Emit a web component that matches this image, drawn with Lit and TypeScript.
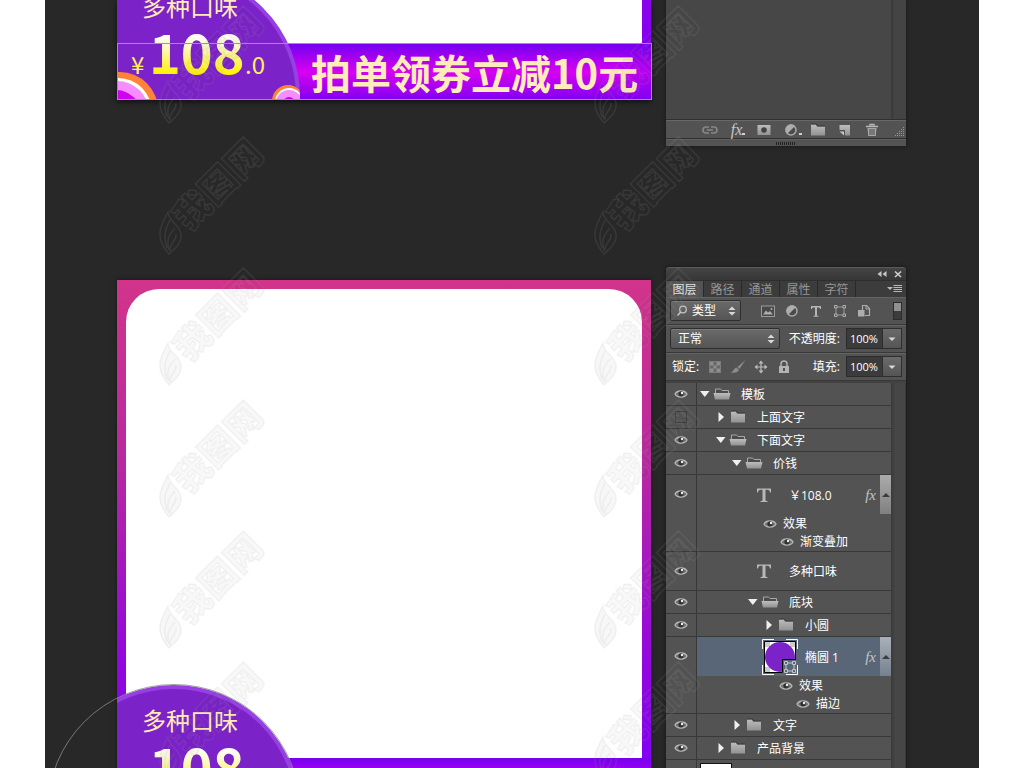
import { LitElement, html, svg, css, nothing } from "lit";
import { customElement, property, state } from "lit/decorators.js";
import { classMap } from "lit/directives/class-map.js";
import { styleMap } from "lit/directives/style-map.js";

const icon = (name: string) => {
  const grad = svg`<defs><linearGradient id="lg" x1="0" y1="0" x2="0" y2="1">
    <stop offset="0" stop-color="#bdbdbd"/><stop offset="1" stop-color="#929292"/></linearGradient></defs>`;
  const shapes: Record<string, unknown> = {
    eye: svg`<path d="M2 8C4 4 12 4 14 8C12 12 4 12 2 8z" fill="#707070" stroke="#b8b8b8" stroke-width="1.300"/>
      <circle cx="8" cy="7.800" r="2.600" fill="#303030"/><circle cx="9" cy="7" r="1.200" fill="#f0f0f0"/>`,
    closed: svg`<path d="M1 2.500h5l1 2h8v9H1z" fill="url(#lg)"/><path d="M1 2h5.500l1 2H15" fill="none" stroke="#2c2c2c" stroke-opacity=".7"/>`,
    open: svg`<path d="M1.500 8V3h5l1.500 1.500h6.500V8" fill="#4c4c4c" stroke="#a8a8a8"/><path d="M-.5 7h17l-1.500 6.500h-14z" fill="url(#lg)"/>`,
    text: svg`<path d="M1 1.500h14v4h-1c-.3-2-1-2.800-2.500-2.800H9.500v10c0 1 .5 1.300 2 1.300v1h-7v-1c1.500 0 2-.3 2-1.300v-10H4.500C3 2.700 2.300 3.500 2 5.500H1z" fill="#b8b8b8"/>`,
    smallText: svg`<path d="M3 3h10v3h-1c-.2-1.300-.7-1.500-1.700-1.500H9V12c0 .7.400.9 1.500.9v.8h-5v-.8c1.100 0 1.500-.2 1.500-.9V4.500H5.700C4.700 4.500 4.200 4.700 4 6H3z" fill="#b4b4b4"/>`,
    picture: svg`<rect x="1.500" y="3" width="13" height="10.500" fill="#484848" stroke="#9c9c9c"/><path d="M3 11.500l3-4 2 2 2-1.500 3 3.500z" fill="#adadad"/><circle cx="11.500" cy="6" r="1" fill="#adadad"/>`,
    adjust: svg`<circle cx="8" cy="8" r="5" fill="#4a4a4a" stroke="#a8a8a8" stroke-width="1.500"/><path d="M4 12A5.500 5.500 0 0 1 12 4z" fill="#adadad"/>`,
    transform: svg`<path d="M4 4h8v8H4z" fill="none" stroke="#9c9c9c"/><path d="M2.500 2.500h2.500v2.500H2.500zM11 2.500h2.500v2.500H11zM2.500 11h2.500v2.500H2.500zM11 11h2.500v2.500H11z" fill="#535353" stroke="#b0b0b0"/>`,
    smart: svg`<path d="M6.500 7V2.500h4l3 3v7H9" fill="none" stroke="#adadad" stroke-width="1.200"/><path d="M10 2v4h4" fill="none" stroke="#adadad"/><rect x="2" y="7" width="6.500" height="6.500" fill="#adadad"/>`,
    search: svg`<circle cx="8" cy="6.500" r="3.300" fill="none" stroke="#c4c4c4" stroke-width="1.300"/><path d="M5.800 9L2.500 12.500" stroke="#c4c4c4" stroke-width="1.600"/>`,
    pixels: svg`<rect x="2.500" y="2.500" width="11" height="11" fill="#686868" stroke="#7c7c7c"/><path d="M3 3h3.500v3.500H3zM9.500 3H13v3.500H9.500zM6.500 6.500h3v3h-3zM3 9.500h3.500V13H3zM9.500 9.500H13V13H9.500z" fill="#8d8d8d"/>`,
    brush: svg`<path d="M15.500 1L7.500 8l2 2z" fill="#8c8c8c"/><path d="M6.500 8.500l2.500 2.500c-1.500 3-5 3-8.500 2.500C4 13 3.500 9 6.500 8.500z" fill="#8c8c8c"/>`,
    move: svg`<path d="M8 1.500l2.500 3h-5zM8 14.500l2.500-3h-5zM1.500 8l3-2.500v5zM14.500 8l-3-2.500v5z" fill="#bcbcbc"/><path d="M8 3v10M3 8h10" stroke="#bcbcbc" stroke-width="1.200"/>`,
    lock: svg`<path d="M5 8V5a3 3 0 0 1 6 0v3" fill="none" stroke="#b4b4b4" stroke-width="1.500"/><rect x="3" y="7" width="10" height="7" fill="#b4b4b4"/><path d="M8 9v3" stroke="#444" stroke-width="1.800"/>`,
    link: svg`<path d="M7 5H4a3 3 0 0 0 0 6h3M9 5h3a3 3 0 0 1 0 6H9M5 8h6" fill="none" stroke="#888" stroke-width="1.600"/>`,
    mask: svg`<rect x="1.500" y="3" width="13" height="10" fill="url(#lg)"/><circle cx="8" cy="8" r="2.800" fill="#424242"/>`,
    fresh: svg`<path d="M2.500 3H13v10.500H8V8H2.500z" fill="url(#lg)"/><path d="M2.500 9.500H7v4z" fill="#c4c4c4"/>`,
    trash: svg`<path d="M2 4.500h12M6 3.500V2.500h4v1" fill="none" stroke="#b8b8b8" stroke-width="1.400"/><path d="M3.500 6h9l-.7 8H4.200z" fill="#a6a6a6"/><path d="M6 7v6M8 7v6M10 7v6" stroke="#484848"/>`,
    collapse: svg`<path d="M7.500 5v6L3.500 8zM12.500 5v6L8.500 8z" fill="#c8c8c8"/>`,
    close: svg`<path d="M5 5.500l6 5.500M11 5.500L5 11" stroke="#d0d0d0" stroke-width="1.600"/>`,
    menu: svg`<path d="M0 6h6L3 9z" fill="#b8b8b8"/><path d="M6.500 4.500h8.500M6.500 6.500h8.500M6.500 8.500h8.500M6.500 10.500h8.500" stroke="#b8b8b8"/>`,
    updown: svg`<path d="M4.500 7h7L8 3.500zM4.500 9h7L8 12.500z" fill="#d8d8d8"/>`,
    down: svg`<path d="M4.500 6.500h7L8 10z" fill="#d8d8d8"/>`,
    up: svg`<path d="M4 10h8L8 6z" fill="#3c3c3c"/>`,
    expanded: svg`<path d="M3 5h9.500L7.800 11z" fill="#f0f0f0"/>`,
    collapsed: svg`<path d="M5.500 3l5.500 5-5.500 5z" fill="#f0f0f0"/>`,
    empty: svg`<rect x="2.500" y="2.500" width="11" height="11" fill="none" stroke="#3c3c3c"/>`,
  };
  return html`<svg width="16" height="16" viewBox="0 0 16 16" overflow="visible" aria-hidden="true">${grad}${shapes[name]}</svg>`;
};

const iconStyles = css`
  * { box-sizing: border-box; }
  svg { display: block; flex: none; }
  button {
    display: flex; align-items: center; justify-content: center;
    padding: 0; border: 0; background: none; color: inherit; font: inherit;
  }
`;

@customElement("promo-board")
class PromoBoard extends LitElement {
  @property({ type: Boolean }) banner = false;

  static styles = css`
    :host { display: block; }
    svg { display: block; width: 100%; overflow: visible; }
    text { font-family: "Noto Sans CJK SC", sans-serif; }
    .taste { font-size: 24px; fill: #ffedb5; }
    .price { font-size: 54px; font-weight: 700; }
    .small { font-size: 24px; fill: #fdf05a; font-weight: 400; }
    .slogan { font-size: 40px; font-weight: 700; fill: #ffedb9; }
  `;

  render() {
    return html`<svg viewBox="0 0 534 534">
      <defs>
        <linearGradient id="edge" x1="0" y1="0" x2="0" y2="1">
          <stop offset="0" stop-color="#d2348a"/><stop offset=".35" stop-color="#b828a0"/>
          <stop offset=".7" stop-color="#9408dc"/><stop offset=".88" stop-color="#8400f0"/><stop offset="1" stop-color="#8400f0"/>
        </linearGradient>
        <linearGradient id="bar" x1="0" y1="0" x2="0" y2="1">
          <stop offset="0" stop-color="#7400f0"/><stop offset=".5" stop-color="#d800f2"/><stop offset="1" stop-color="#8000f0"/>
        </linearGradient>
        <linearGradient id="barEnd" x1="0" y1="0" x2="1" y2="0">
          <stop offset=".93" stop-color="#8000f0" stop-opacity="0"/><stop offset="1" stop-color="#8000f0" stop-opacity=".4"/>
        </linearGradient>
        <linearGradient id="gold" gradientUnits="userSpaceOnUse" x1="0" y1="468" x2="0" y2="508">
          <stop offset="0" stop-color="#fff"/><stop offset=".3" stop-color="#fdf9cc"/><stop offset="1" stop-color="#fff200"/>
        </linearGradient>
        <clipPath id="frame"><rect width="534" height="534"/></clipPath>
        <clipPath id="disc"><circle cx="57" cy="531" r="126"/></clipPath>
      </defs>
      <g clip-path="url(#frame)">
        <rect width="534" height="534" fill="url(#edge)"/>
        <path d="M9 478V42a33 33 0 0 1 33-33h450a33 33 0 0 1 33 33v436z" fill="#fff"/>
        <rect y="478" width="534" height="56" fill="url(#bar)"/>
        <rect y="478" width="534" height="56" fill="url(#barEnd)"/>
        <circle cx="57" cy="531" r="124" fill="#7b22c8" stroke="#963fe2" stroke-width="4"/>
        <text class="taste" x="25" y="450">多种口味</text>
        <text class="small" x="14" y="508">¥</text>
        <text class="price" x="32" y="508" fill="url(#gold)">108</text>
        <text class="small" x="128" y="508">.0</text>
        <g clip-path="url(#disc)">
          <circle cx="3" cy="544" r="38" fill="#ff8236"/><circle cx="1" cy="546" r="34" fill="#fff"/>
          <circle cx="0" cy="547" r="32" fill="#f58cff"/><circle cx="-1" cy="549" r="25" fill="#d000f0"/>
          <circle cx="171" cy="535" r="16" fill="#ff8236"/><circle cx="172" cy="536" r="14" fill="#fff"/>
          <circle cx="172" cy="537" r="13" fill="#f58cff"/><circle cx="172" cy="537" r="6" fill="#c800f0"/>
        </g>
        <text class="slogan" x="194" y="523">拍单领券立减10元</text>
      </g>
      ${this.banner
        ? svg`<rect x=".5" y="477.500" width="534" height="56" fill="none" stroke="#a08fb0"/>`
        : svg`<circle cx="57" cy="531" r="126.500" fill="none" stroke="#8a8a8a" stroke-width=".8"/>`}
    </svg>`;
  }
}

interface Layer {
  name: string; depth: number; kind: "open" | "closed" | "text" | "shape";
  hidden?: boolean; selected?: boolean; effects?: string[];
}

const layers: Layer[] = [
  { name: "模板", depth: 0, kind: "open" },
  { name: "上面文字", depth: 1, kind: "closed", hidden: true },
  { name: "下面文字", depth: 1, kind: "open" },
  { name: "价钱", depth: 2, kind: "open" },
  { name: "￥108.0", depth: 3, kind: "text", effects: ["效果", "渐变叠加"] },
  { name: "多种口味", depth: 3, kind: "text" },
  { name: "底块", depth: 3, kind: "open" },
  { name: "小圆", depth: 4, kind: "closed" },
  { name: "椭圆 1", depth: 4, kind: "shape", selected: true, effects: ["效果", "描边"] },
  { name: "文字", depth: 2, kind: "closed" },
  { name: "产品背景", depth: 1, kind: "closed" },
];

@customElement("layers-panel")
class LayersPanel extends LitElement {
  @state() private tab = "图层";

  static styles = [iconStyles, css`
    :host {
      display: block; background: #535353; color: #fff;
      font: 12px/16px "Open Sans", "Noto Sans CJK SC", sans-serif;
      border-radius: 4px 4px 0 0; box-shadow: 0 0 4px #161616;
    }
    .title {
      display: flex; justify-content: flex-end; height: 13px;
      background: linear-gradient(#444, #373737); border-top: 1px solid #5a5a5a; border-radius: 4px 4px 0 0;
    }
    .tabs { display: flex; height: 17px; background: #3c3c3c; border-top: 1px solid #2e2e2e; }
    .tab { width: 38px; height: 16px; padding-top: 1px; border-right: 1px solid #292929; color: #969696; }
    .tab.active { background: #535353; color: #e6e6e6; }
    .options { margin-left: auto; padding-right: 3px; }
    .bar {
      display: flex; align-items: center; height: 28px; padding: 0 4px 1px;
      border-bottom: 1px solid #383838; border-top: 1px solid #636363;
    }
    .pick {
      display: flex; align-items: center; height: 21px;
      border: 1px solid #2e2e2e; border-radius: 2px; background: linear-gradient(#6a6a6a, #555);
      box-shadow: inset 0 1px #7a7a7a;
    }
    .pick select {
      appearance: none; width: 100%; height: 19px; padding: 0 0 0 7px; border: 0;
      background: none; color: #fff; font: inherit;
    }
    .pick.kind { width: 71px; padding-left: 4px; }
    .pick.kind select { padding-left: 1px; }
    .pick.mode { width: 110px; }
    .arrows { flex: none; margin-left: -16px; pointer-events: none; }
    .filters { display: flex; margin-left: 15px; }
    .filters button { width: 24px; height: 20px; }
    .toggle { width: 9px; height: 18px; margin-left: auto; border: 1px solid #2c2c2c; background: linear-gradient(#909090 50%, #3c3c3c 50%); }
    .amount { display: flex; align-items: center; margin-left: auto; }
    .amount input {
      width: 37px; height: 21px; margin-left: 6px; padding: 0 0 0 3px; border: 1px solid #2c2c2c;
      background: #3b3b3b; color: #fff; font: 11px/16px "Open Sans", sans-serif;
    }
    .amount button { width: 20px; height: 21px; margin-left: -1px; border: 1px solid #2e2e2e; background: linear-gradient(#6a6a6a, #555); }
    .locklabel { padding: 0 4px 0 2px; }
    .locks { display: flex; }
    .locks button { width: 23px; height: 20px; }
    .scroller { display: flex; background: #434343; border-top: 2px solid #424242; }
    .list { flex: 1; margin: 0; padding: 0; list-style: none; background: #535353; }
    .track { width: 15px; background: linear-gradient(90deg, #3a3a3a, #464646 4px); border-right: 1px solid #3a3a3a; }
    .row { display: flex; border-bottom: 1px solid #383838; }
    .see { width: 31px; border-right: 1px solid #383838; }
    .see button { width: 30px; height: 22px; }
    .tall .see button { height: 38px; }
    .body { flex: 1; }
    .main { display: flex; align-items: center; height: 22px; }
    .tall .main { height: 38px; }
    .fxrow .main { height: 39px; }
    .selected .main { background: #596678; }
    .twist { width: 10px; height: 20px; margin-right: 2px; }
    .glyph { display: flex; justify-content: center; width: 19px; margin-right: 10px; }
    .glyph.wide { width: 31px; }
    .glyph svg { margin: 0 -8px; }
    .name { padding-top: 2px; }
    .fx { margin-left: auto; margin-right: 4px; font: italic 15px/16px "Liberation Serif", serif; color: #c4c4c4; }
    .fold { width: 11px; height: 39px; background: linear-gradient(#ababab, #808080); }
    .selected .fold { background: linear-gradient(#aab0b8, #76808f); }
    .effect { display: flex; align-items: center; gap: 6px; height: 19px; padding-left: 18px; }
    .effect:last-child { height: 18px; padding-left: 35px; }
    .effect button { width: 14px; }
    .backdrop { height: 34px; width: 32px; margin: 3px 0 0 3px; border: 1px solid #111; background: #fff; }
  `];

  private layerIcon(layer: Layer) {
    if (layer.kind === "shape") {
      return html`<svg width="36" height="36" viewBox="0 0 36 36">
        <path d="M.5 10V.5H12M24 .5h11.500V10M35.500 26v9.500H24M12 35.500H.5V26" fill="none" stroke="#fff"/>
        <path d="M2.500 2.500h31v31h-31z" fill="#fff" stroke="#000"/>
        <path d="M3 3h5v5H3zM28 3h5v5h-5zM3 28h5v5H3z" fill="#ccc"/>
        <circle cx="18" cy="18" r="15" fill="#7b22c8"/>
        <path d="M20.500 34.500v-14h14v14z" fill="#596678"/><path d="M20.500 33v-12.500H34" fill="none" stroke="#000"/>
        <path d="M24 24h8v8h-8z" fill="none" stroke="#c4c8ce"/>
        <path d="M22.500 22.500h3v3h-3zM30.500 22.500h3v3h-3zM22.500 30.500h3v3h-3zM30.500 30.500h3v3h-3z" fill="#596678" stroke="#c4c8ce"/>
      </svg>`;
    }
    return icon(layer.kind);
  }

  private row(layer: Layer) {
    const group = layer.kind === "open" || layer.kind === "closed";
    const classes = { row: true, tall: !group, fxrow: !!layer.effects, selected: !!layer.selected };
    return html`<li class=${classMap(classes)}>
      <div class="see"><button aria-label="可见性 ${layer.name}">${icon(layer.hidden ? "empty" : "eye")}</button></div>
      <div class="body">
        <div class="main" style=${styleMap({ paddingLeft: `${3 + layer.depth * 16}px` })}>
          ${group ? html`<button class="twist" aria-label="展开 ${layer.name}">${icon(layer.kind === "open" ? "expanded" : "collapsed")}</button>` : nothing}
          <span class=${classMap({ glyph: true, wide: !group })}>${this.layerIcon(layer)}</span>
          <span class="name">${layer.name}</span>
          ${layer.effects ? html`<span class="fx">fx</span><button class="fold" aria-label="折叠效果">${icon("up")}</button>` : nothing}
        </div>
        ${layer.effects ? html`<div style=${styleMap({ marginLeft: `${layer.depth * 16}px` })}>
          ${layer.effects.map((e) => html`<div class="effect"><button aria-label="可见性 ${e}">${icon("eye")}</button><span>${e}</span></div>`)}
        </div>` : nothing}
      </div>
    </li>`;
  }

  render() {
    return html`
      <div class="title"><button aria-label="折叠">${icon("collapse")}</button><button aria-label="关闭">${icon("close")}</button></div>
      <div class="tabs">
        ${["图层", "路径", "通道", "属性", "字符"].map((t) => html`<button
          class=${classMap({ tab: true, active: t === this.tab })} @click=${() => (this.tab = t)}>${t}</button>`)}
        <button class="options" aria-label="菜单">${icon("menu")}</button>
      </div>
      <div class="bar">
        <div class="pick kind">${icon("search")}<select aria-label="滤镜类型"><option>类型</option></select><span class="arrows">${icon("updown")}</span></div>
        <div class="filters">${["picture", "adjust", "smallText", "transform", "smart"].map((n) => html`<button aria-label=${n}>${icon(n)}</button>`)}</div>
        <button class="toggle" aria-label="滤镜开关"></button>
      </div>
      <div class="bar">
        <div class="pick mode"><select aria-label="混合模式"><option>正常</option></select><span class="arrows">${icon("updown")}</span></div>
        <div class="amount"><label for="opacity">不透明度:</label><input id="opacity" value="100%"><button aria-label="不透明度滑块">${icon("down")}</button></div>
      </div>
      <div class="bar">
        <span class="locklabel">锁定:</span>
        <div class="locks">${["pixels", "brush", "move", "lock"].map((n) => html`<button aria-label=${n}>${icon(n)}</button>`)}</div>
        <div class="amount"><label for="fill">填充:</label><input id="fill" value="100%"><button aria-label="填充滑块">${icon("down")}</button></div>
      </div>
      <div class="scroller">
        <ul class="list">
          ${layers.map((l) => this.row(l))}
          <li class="row tall"><div class="see"><button aria-label="可见性">${icon("eye")}</button></div><div class="backdrop"></div></li>
        </ul>
        <div class="track"></div>
      </div>`;
  }
}

@customElement("panel-footer")
class PanelFooter extends LitElement {
  static styles = [iconStyles, css`
    :host { display: flex; flex-direction: column; height: 146px; background: #535353; box-shadow: 0 0 4px #161616; }
    .area { flex: 1; display: flex; background: #474747; border-bottom: 1px solid #303030; }
    .area::after { content: ""; width: 15px; margin-left: auto; background: linear-gradient(90deg, #393939, #444 4px); }
    .tools { display: flex; align-items: center; height: 19px; padding-left: 30px; border-top: 1px solid #686868; border-bottom: 1px solid #303030; }
    .tools button { width: 27px; height: 17px; }
    .tools .drop::after { content: ""; width: 3px; height: 2px; margin: 9px -3px 0 0; background: #d0d0d0; }
    .fx { font: italic 16px/16px "Liberation Serif", serif; color: #c8c8c8; }
    .corner { margin: 4px 1px 0 auto; width: 10px; height: 10px; }
    .grip { display: flex; justify-content: center; align-items: center; height: 7px; border-top: 1px solid #606060; }
    .grip::after { content: ""; width: 20px; height: 3px; background: repeating-linear-gradient(90deg, #222 0 1px, #535353 1px 2px); }
  `];

  render() {
    return html`
      <div class="area"></div>
      <div class="tools">
        <button aria-label="链接图层">${icon("link")}</button>
        <button class="drop" aria-label="图层样式"><span class="fx">fx</span></button>
        <button aria-label="蒙版">${icon("mask")}</button>
        <button class="drop" aria-label="调整">${icon("adjust")}</button>
        <button aria-label="新建组">${icon("closed")}</button>
        <button aria-label="新建图层">${icon("fresh")}</button>
        <button aria-label="删除">${icon("trash")}</button>
        <svg class="corner" viewBox="0 0 10 10"><path d="M8 0h1v1H8zM6 2h1v1H6zM8 2h1v1H8zM4 4h1v1H4zM6 4h1v1H6zM8 4h1v1H8zM2 6h1v1H2zM4 6h1v1H4zM6 6h1v1H6zM8 6h1v1H8zM0 8h1v1H0zM2 8h1v1H2zM4 8h1v1H4zM6 8h1v1H6zM8 8h1v1H8z" fill="#999"/></svg>
      </div>
      <div class="grip"></div>`;
  }
}

@customElement("app-root")
class AppRoot extends LitElement {
  static styles = css`
    :host { display: block; height: 100vh; overflow: hidden; position: relative; background: #fff; padding: 0 45px; box-sizing: border-box; }
    .desk { min-height: 100%; padding: 0 72px; background: #282828; overflow: hidden; box-sizing: border-box; }
    .scene { display: flex; align-items: flex-start; gap: 15px; }
    .scene + .scene { margin-top: 121px; }
    promo-board { flex: 0 1 534px; }
    .cut { display: flex; align-items: flex-end; flex: 0 1 534px; height: 100px; box-shadow: 0 2px 5px #111; }
    layers-panel, panel-footer { flex: 0 0 240px; }
    .lower { margin-top: 13px; box-shadow: 0 0 4px #161616; }
    .marks { position: absolute; top: 0; left: 0; pointer-events: none; }
    .mark { font: 900 36px "Noto Sans CJK SC", sans-serif; }
  `;

  private mark(x: number, y: number) {
    return svg`<g transform="translate(${x} ${y})">
      <g fill="none" stroke="#aaa" stroke-opacity=".13" stroke-width="1.500">
        <path d="M10 114C-4 98 0 88 9 72C9 82 24 86 22 98C21 106 14 110 10 114z" fill="#333" fill-opacity=".04"/>
        <path d="M8 108C4 96 6 90 11 80M10 110C7 100 10 94 16 88M11 111C10 102 18 102 17 94"/>
      </g>
      <text class="mark" transform="translate(30 92) rotate(-45)" fill="#333" fill-opacity=".05" stroke="#aaa" stroke-opacity=".12" stroke-width="1.500">我图网</text>
    </g>`;
  }

  render() {
    const tops = [9, 140, 271, 403, 534, 665];
    return html`
      <main class="desk">
        <section class="scene"><div class="cut"><promo-board banner></promo-board></div><panel-footer></panel-footer></section>
        <section class="scene"><promo-board class="lower"></promo-board><layers-panel></layers-panel></section>
      </main>
      <svg class="marks" width="100%" height="100%" aria-hidden="true">
        ${tops.map((y) => [this.mark(159, y), this.mark(594, y)])}
      </svg>`;
  }
}
